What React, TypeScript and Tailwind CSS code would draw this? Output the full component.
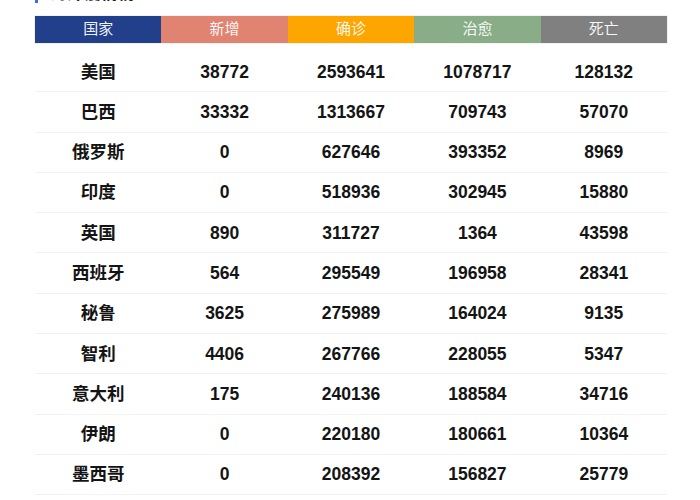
const headers = [
  { label: "国家", bg: "bg-[#213f8a]" },
  { label: "新增", bg: "bg-[#e08371]" },
  { label: "确诊", bg: "bg-[#ffa500]" },
  { label: "治愈", bg: "bg-[#88ad87]" },
  { label: "死亡", bg: "bg-[#808080]" },
];

const rows = [
  ["美国", "38772", "2593641", "1078717", "128132"],
  ["巴西", "33332", "1313667", "709743", "57070"],
  ["俄罗斯", "0", "627646", "393352", "8969"],
  ["印度", "0", "518936", "302945", "15880"],
  ["英国", "890", "311727", "1364", "43598"],
  ["西班牙", "564", "295549", "196958", "28341"],
  ["秘鲁", "3625", "275989", "164024", "9135"],
  ["智利", "4406", "267766", "228055", "5347"],
  ["意大利", "175", "240136", "188584", "34716"],
  ["伊朗", "0", "220180", "180661", "10364"],
  ["墨西哥", "0", "208392", "156827", "25779"],
];

export default function App() {
  return (
    <div className="w-[700px] h-[500px] overflow-hidden bg-white pl-[35px] font-['Liberation_Sans','Noto_Sans_CJK_SC',sans-serif]">
      <div className="-mt-[16px] h-[20px] flex items-center gap-3">
        <div className="w-[3px] h-[18px] bg-[#3b6cf0]" />
        <p className="text-[17px] leading-[20px] font-bold text-[#222]">海外疫情榜</p>
      </div>
      <div className="mt-[12px] w-[632px]">
        <div className="grid grid-cols-5 h-[27px] ring-1 ring-black/5">
          {headers.map((h) => (
            <div
              key={h.label}
              className={`${h.bg} flex items-center justify-center text-[15px] text-white/95`}
            >
              {h.label}
            </div>
          ))}
        </div>
        <div className="mt-[9px]">
          {rows.map((r) => (
            <div
              key={r[0]}
              className="grid grid-cols-5 h-[40.3px] border-b border-[#f2f2f2] text-[17.5px] font-bold text-[#141414]"
            >
              {r.map((cell, i) => (
                <div key={i} className="flex items-center justify-center">
                  {cell}
                </div>
              ))}
            </div>
          ))}
        </div>
      </div>
    </div>
  );
}
